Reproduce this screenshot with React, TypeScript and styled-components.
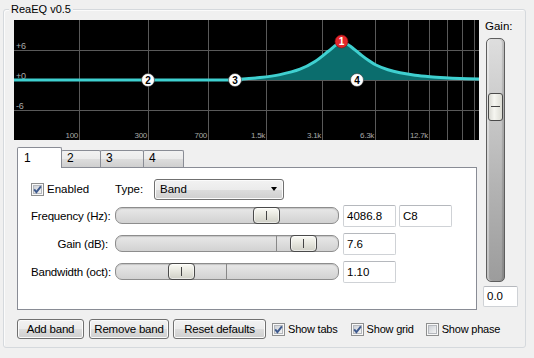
import React from 'react';
import styled, { createGlobalStyle } from 'styled-components';

const GlobalStyle = createGlobalStyle`
  html, body {
    margin: 0;
    padding: 0;
    background: #f0f0f0;
  }
  body {
    font-family: 'Liberation Sans', Arial, sans-serif;
    font-size: 11px;
    color: #000;
  }
`;

// graph geometry, local to the black area (465 x 120)
const vLines = [65, 134, 194, 252, 308, 361, 394, 415, 433, 448, 460];
const hLines = [30, 60, 90];
const freqLabels: [number, string][] = [
  [65, '100'],
  [134, '300'],
  [194, '700'],
  [252, '1.5k'],
  [308, '3.1k'],
  [361, '6.3k'],
  [415, '12.7k'],
];
const dbLabels: [number, string][] = [
  [29, '+6'],
  [59, '+0'],
  [89, '-6'],
];

const curve: [number, number][] = [
  [0, 60], [206, 60], [226, 59.2], [246, 57.6], [266, 54.6], [286, 49.2],
  [301, 41.5], [314, 31.5], [322, 25], [327, 22.5], [332, 23.5], [338, 27.5],
  [346, 34], [354, 40], [362, 45], [374, 49.8], [386, 52.8], [401, 55.2],
  [416, 56.7], [431, 57.7], [446, 58.4], [465, 59],
];

// catmull-rom through the points
const smoothPath = (pts: [number, number][]) => {
  let d = `M${pts[0][0]},${pts[0][1]}`;
  for (let i = 0; i < pts.length - 1; i++) {
    const p0 = pts[i - 1] || pts[i];
    const p1 = pts[i];
    const p2 = pts[i + 1];
    const p3 = pts[i + 2] || p2;
    const c1x = p1[0] + (p2[0] - p0[0]) / 6;
    const c1y = p1[1] + (p2[1] - p0[1]) / 6;
    const c2x = p2[0] - (p3[0] - p1[0]) / 6;
    const c2y = p2[1] - (p3[1] - p1[1]) / 6;
    d += ` C${c1x.toFixed(1)},${c1y.toFixed(1)} ${c2x.toFixed(1)},${c2y.toFixed(1)} ${p2[0]},${p2[1]}`;
  }
  return d;
};

const linePath = smoothPath(curve);
const fillPath = `${linePath} L465,60 L0,60 Z`;

const nodes = [
  { n: 2, x: 134, y: 60, red: false },
  { n: 3, x: 221, y: 60, red: false },
  { n: 4, x: 343, y: 60, red: false },
  { n: 1, x: 327.5, y: 21.5, red: true },
];

const EqGraph = () => (
  <GraphSvg width="465" height="120" viewBox="0 0 465 120">
    <rect width="465" height="120" fill="#000" />
    {vLines.map((x) => (
      <line key={x} x1={x + 0.5} y1="0" x2={x + 0.5} y2="120" stroke="#595959" />
    ))}
    {hLines.map((y) => (
      <line key={y} x1="0" y1={y + 0.5} x2="465" y2={y + 0.5} stroke="#595959" />
    ))}
    {dbLabels.map(([y, t]) => (
      <GraphText key={t} x="2" y={y} fontSize="9">
        {t}
      </GraphText>
    ))}
    {freqLabels.map(([x, t]) => (
      <GraphText key={t} x={x - 1} y="118" fontSize="8" textAnchor="end">
        {t}
      </GraphText>
    ))}
    <path d={fillPath} fill="#0b6d6d" />
    <path d={linePath} fill="none" stroke="#3fd0d0" strokeWidth="3" />
    {nodes.map((p) => (
      <g key={p.n}>
        <circle
          cx={p.x}
          cy={p.y}
          r="6.5"
          fill={p.red ? '#e3262b' : '#fff'}
          stroke={p.red ? '#8a1010' : '#333'}
          strokeWidth="0.6"
        />
        <NodeText x={p.x} y={p.y + 3.5} fill={p.red ? '#fff' : '#000'}>
          {p.n}
        </NodeText>
      </g>
    ))}
  </GraphSvg>
);

const CheckBox = ({ checked }: { checked?: boolean }) => (
  <CheckSvg width="13" height="13" viewBox="0 0 13 13">
    <defs>
      <linearGradient id="cbInner" x1="0" y1="0" x2="1" y2="1">
        <stop offset="0" stopColor="#cbcfd5" />
        <stop offset="1" stopColor="#f6f6f6" />
      </linearGradient>
    </defs>
    <rect x="0.5" y="0.5" width="12" height="12" fill="#f8f8f8" stroke="#8e8f8f" />
    <rect x="2.5" y="2.5" width="8" height="8" fill="url(#cbInner)" stroke="#b5b8bd" />
    {checked && (
      <path d="M3.2 6.4 L5.4 9.2 L9.9 3.3" fill="none" stroke="#3e5a8e" strokeWidth="1.9" />
    )}
  </CheckSvg>
);

type SliderProps = { thumb: number; tick?: number };

const HSlider = ({ thumb, tick }: SliderProps) => (
  <SliderBox>
    <Track>{tick !== undefined && <Tick $left={tick} />}</Track>
    <Thumb $left={thumb} />
  </SliderBox>
);

const App = () => {
  return (
    <>
      <GlobalStyle />
      <Window>
        <Group>
          <Legend>ReaEQ v0.5</Legend>
          <MainRow>
            <LeftCol>
              <EqGraph />
              <TabStrip>
                <Tab $active $w={45}>1</Tab>
                <Tab $w={40}>2</Tab>
                <Tab $w={44}>3</Tab>
                <Tab $w={41}>4</Tab>
              </TabStrip>
              <Panel>
                <TopRow>
                  <EnabledLabel>
                    <CheckBox checked />
                    <span>Enabled</span>
                  </EnabledLabel>
                  <TypeLabel>Type:</TypeLabel>
                  <Combo>
                    <span>Band</span>
                    <Arrow />
                  </Combo>
                </TopRow>
                <ParamRow>
                  <ParamLabel>Frequency (Hz):</ParamLabel>
                  <HSlider thumb={138} />
                  <ValueBox>4086.8</ValueBox>
                  <NoteBox>C8</NoteBox>
                </ParamRow>
                <ParamRow>
                  <ParamLabel>Gain (dB):</ParamLabel>
                  <HSlider thumb={175} tick={161} />
                  <ValueBox>7.6</ValueBox>
                </ParamRow>
                <ParamRow>
                  <ParamLabel>Bandwidth (oct):</ParamLabel>
                  <HSlider thumb={53} tick={111} />
                  <ValueBox>1.10</ValueBox>
                </ParamRow>
              </Panel>
            </LeftCol>
            <GainCol>
              <GainLabel>Gain:</GainLabel>
              <VSlider>
                <VThumb />
              </VSlider>
              <GainBox>0.0</GainBox>
            </GainCol>
          </MainRow>
          <BottomRow>
            <Button $w={67}>Add band</Button>
            <Button $w={80} $gap={5}>Remove band</Button>
            <Button $w={93} $gap={4}>Reset defaults</Button>
            <CheckItem $gap={6}>
              <CheckBox checked />
              <span>Show tabs</span>
            </CheckItem>
            <CheckItem $gap={13}>
              <CheckBox checked />
              <span>Show grid</span>
            </CheckItem>
            <CheckItem $gap={12}>
              <CheckBox />
              <span>Show phase</span>
            </CheckItem>
          </BottomRow>
        </Group>
      </Window>
    </>
  );
};

export default App;

const Window = styled.div`
  width: 534px;
  height: 358px;
  box-sizing: border-box;
  padding: 9px 0 0 3px;
  overflow: hidden;
  background: #f0f0f0;
`;

const Group = styled.div`
  position: relative;
  width: 523px;
  height: 339px;
  box-sizing: border-box;
  border: 1px solid #d5d9dd;
  border-radius: 3px;
  padding: 10px 0 0 10px;
  box-shadow: inset 1px 1px 0 #fbfbfb;
`;

const Legend = styled.span`
  position: absolute;
  top: -8px;
  left: 5px;
  padding: 0 2px;
  background: #f0f0f0;
  line-height: 14px;
`;

const MainRow = styled.div`
  display: flex;
  gap: 4px;
`;

const LeftCol = styled.div`
  width: 465px;
  display: flex;
  flex-direction: column;
`;

const GraphSvg = styled.svg`
  display: block;
  font-family: 'Liberation Sans', Arial, sans-serif;
`;

const GraphText = styled.text`
  fill: #a8a8a8;
  letter-spacing: -0.3px;
`;

const NodeText = styled.text`
  font-size: 10px;
  font-weight: bold;
  text-anchor: middle;
`;

const TabStrip = styled.div`
  position: relative;
  z-index: 1;
  display: flex;
  align-items: flex-start;
  height: 20px;
  margin: 7px 0 0 3px;
`;

const Tab = styled.div<{ $active?: boolean; $w: number }>`
  box-sizing: border-box;
  width: ${({ $w }) => $w}px;
  height: ${({ $active }) => ($active ? 21 : 17)}px;
  margin-top: ${({ $active }) => ($active ? 0 : 3)}px;
  margin-left: -1px;
  padding: ${({ $active }) => ($active ? '3px 0 0 6px' : '0 0 0 5px')};
  line-height: 14px;
  font-size: 12px;
  border: 1px solid #898c95;
  border-bottom: none;
  border-radius: 2px 2px 0 0;
  background: ${({ $active }) =>
    $active ? '#fff' : 'linear-gradient(#f2f2f2 0%, #ebebeb 50%, #dddddd 51%, #cfcfcf 100%)'};
  position: relative;
  z-index: ${({ $active }) => ($active ? 2 : 1)};

  &:first-child {
    margin-left: 0;
  }
`;

const Panel = styled.div`
  position: relative;
  z-index: 0;
  box-sizing: border-box;
  width: 460px;
  height: 143px;
  margin-left: 3px;
  padding: 11px 0 0 13px;
  background: #fff;
  border: 1px solid #898c95;
  display: flex;
  flex-direction: column;
  gap: 6px;
`;

const TopRow = styled.div`
  display: flex;
  align-items: center;
  height: 20px;
`;

const EnabledLabel = styled.label`
  display: flex;
  align-items: center;
  gap: 3px;
  width: 84px;
  font-size: 11.5px;
`;

const TypeLabel = styled.span`
  width: 39px;
  font-size: 11.5px;
`;

const Combo = styled.div`
  box-sizing: border-box;
  width: 130px;
  height: 21px;
  display: flex;
  align-items: center;
  justify-content: space-between;
  padding: 0 6px 0 5px;
  border: 1px solid #707070;
  border-radius: 3px;
  background: linear-gradient(#f2f2f2 0%, #ebebeb 50%, #dddddd 51%, #cfcfcf 100%);
  box-shadow: inset 0 0 0 1px #fbfbfb;
  font-size: 11.5px;
`;

const Arrow = styled.span`
  width: 0;
  height: 0;
  border-left: 3.5px solid transparent;
  border-right: 3.5px solid transparent;
  border-top: 4px solid #000;
`;

const ParamRow = styled.div`
  display: flex;
  align-items: center;
  height: 22px;
`;

const ParamLabel = styled.span`
  width: 77px;
  margin-right: 7px;
  text-align: right;
  white-space: nowrap;
  font-size: 11.5px;
  letter-spacing: -0.2px;
`;

const SliderBox = styled.div`
  position: relative;
  width: 224px;
  height: 22px;
`;

const Track = styled.div`
  position: relative;
  box-sizing: border-box;
  width: 224px;
  height: 17px;
  margin-top: 2px;
  border: 1px solid #8d8d8d;
  border-radius: 7px;
  background: linear-gradient(#e8e8e8, #d2d2d2);
  box-shadow: inset 0 1px 1px #c4c4c4;
`;

const Tick = styled.div<{ $left: number }>`
  position: absolute;
  top: 0;
  bottom: 0;
  left: ${({ $left }) => $left - 1}px;
  width: 1px;
  background: #888;
`;

const Thumb = styled.div<{ $left: number }>`
  position: absolute;
  top: 2px;
  left: ${({ $left }) => $left}px;
  box-sizing: border-box;
  width: 27px;
  height: 17px;
  border: 1px solid #4a4a4a;
  border-radius: 4px;
  background: linear-gradient(#fbfbf6, #e6e6dd 50%, #cfcfc6);
  box-shadow: inset 0 0 0 1px #ffffff88;

  &::after {
    content: '';
    position: absolute;
    left: 12px;
    top: 3px;
    width: 1px;
    height: 9px;
    background: #444;
  }
`;

const TextBox = styled.div`
  box-sizing: border-box;
  height: 22px;
  padding: 0 3px;
  line-height: 20px;
  background: #fff;
  border: 1px solid #cfd2d6;
  border-top-color: #b5b8bd;
  border-radius: 2px;
  font-size: 11.5px;
`;

const ValueBox = styled(TextBox)`
  width: 53px;
  margin-left: 4px;
`;

const NoteBox = styled(TextBox)`
  width: 53px;
  margin-left: 3px;
`;

const GainCol = styled.div`
  width: 35px;
  display: flex;
  flex-direction: column;
`;

const GainLabel = styled.span`
  padding-left: 2px;
  line-height: 13px;
  font-size: 11.5px;
`;

const VSlider = styled.div`
  position: relative;
  box-sizing: border-box;
  width: 19px;
  height: 244px;
  margin: 5px 0 0 3px;
  border: 1px solid #5e5e5e;
  border-radius: 5px;
  background: linear-gradient(#dedede, #b4b4b4 60%, #9c9c9c);
  box-shadow: inset 2px 0 1px #ffffff66, inset -2px 0 1px #00000022;
`;

const VThumb = styled.div`
  position: absolute;
  top: 54px;
  left: 1px;
  box-sizing: border-box;
  width: 15px;
  height: 28px;
  border: 1px solid #4a4a4a;
  border-radius: 3px;
  background: linear-gradient(90deg, #d8d8d2, #f6f6f1 40%, #dcdcd4);

  &::after {
    content: '';
    position: absolute;
    left: 2px;
    right: 2px;
    top: 12px;
    height: 1px;
    background: #444;
  }
`;

const GainBox = styled(TextBox)`
  width: 35px;
  height: 21px;
  margin-top: 4px;
  line-height: 19px;
`;

const BottomRow = styled.div`
  display: flex;
  align-items: center;
  margin: 9px 0 0 3px;
`;

const Button = styled.div<{ $w: number; $gap?: number }>`
  box-sizing: border-box;
  width: ${({ $w }) => $w}px;
  height: 20px;
  margin-left: ${({ $gap }) => $gap || 0}px;
  border: 1px solid #707070;
  border-radius: 3px;
  background: linear-gradient(#f2f2f2 0%, #ebebeb 50%, #dddddd 51%, #cfcfcf 100%);
  box-shadow: inset 0 0 0 1px #fbfbfb;
  text-align: center;
  line-height: 18px;
  font-size: 11.5px;
  letter-spacing: -0.2px;
  white-space: nowrap;
`;

const CheckItem = styled.label<{ $gap: number }>`
  display: flex;
  align-items: center;
  gap: 3px;
  margin-left: ${({ $gap }) => $gap}px;
  font-size: 11px;
  letter-spacing: -0.2px;
`;

const CheckSvg = styled.svg`
  display: block;
  flex: none;
`;
